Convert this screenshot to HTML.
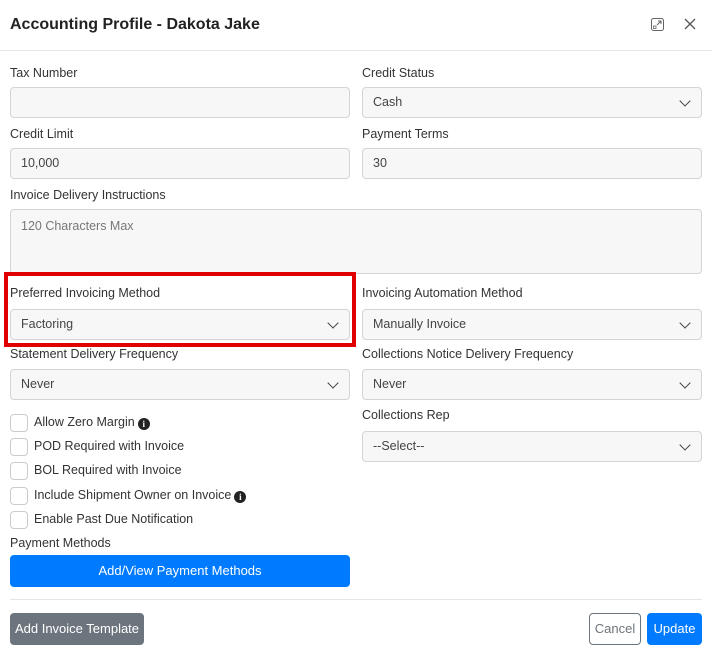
<!DOCTYPE html>
<html><head><meta charset="utf-8"><style>
*{box-sizing:border-box;margin:0;padding:0}
body{width:712px;height:661px;background:#fff;font-family:"Liberation Sans",sans-serif;font-size:12.5px;color:#333;position:relative;overflow:hidden}
.a{position:absolute}
.lbl{position:absolute;font-size:12.5px;color:#333;line-height:16px}
.in{position:absolute;height:31px;background:#f7f7f7;border:1px solid #d4d4d4;border-radius:4px;padding-left:10px;line-height:29px;color:#444;font-size:12.5px}
.in.sel::after{content:"";position:absolute;right:12px;top:9px;width:7px;height:7px;border-right:1.4px solid #444;border-bottom:1.4px solid #444;transform:rotate(45deg)}
.cb{position:absolute;left:10px;width:18px;height:18px;border:1px solid #ccc;border-radius:4px;background:#fff}
.ct{position:absolute;left:34px;font-size:12.5px;line-height:16px;color:#333}
.info{display:inline-block;width:12px;height:12px;border-radius:50%;background:#222;color:#fff;font-size:9px;font-weight:bold;text-align:center;line-height:12px;vertical-align:-1px;margin-left:3px;font-family:"Liberation Serif",serif}
</style></head><body>
<div class="a" style="left:10px;top:15px;font-size:16px;font-weight:bold;color:#222;line-height:20px">Accounting Profile - Dakota Jake</div>
<svg class="a" style="left:651px;top:18px" width="13" height="13" viewBox="0 0 13 13"><rect x="0.5" y="0.5" width="12" height="12" rx="2" fill="none" stroke="#666"/><path d="M6 7 L10 3 M7 3 H10 V6" stroke="#666" fill="none"/><rect x="2.5" y="8" width="2.5" height="2.5" fill="none" stroke="#666" stroke-width=".8"/></svg>
<svg class="a" style="left:684px;top:18px" width="12" height="12" viewBox="0 0 12 12"><path d="M1 1 L11 11 M11 1 L1 11" stroke="#555" stroke-width="1.3"/></svg>
<div class="a" style="left:0;top:50px;width:712px;height:1px;background:#e5e5e5"></div>

<div class="lbl" style="left:10px;top:65px">Tax Number</div>
<div class="in" style="left:10px;top:87px;width:340px"></div>
<div class="lbl" style="left:362px;top:65px">Credit Status</div>
<div class="in sel" style="left:362px;top:87px;width:340px">Cash</div>

<div class="lbl" style="left:10px;top:126px">Credit Limit</div>
<div class="in" style="left:10px;top:148px;width:340px">10,000</div>
<div class="lbl" style="left:362px;top:126px">Payment Terms</div>
<div class="in" style="left:362px;top:148px;width:340px">30</div>

<div class="lbl" style="left:10px;top:187px">Invoice Delivery Instructions</div>
<div class="in" style="left:10px;top:209px;width:692px;height:65px;line-height:16px;padding-top:8px;color:#777">120 Characters Max</div>

<div class="lbl" style="left:10px;top:285px">Preferred Invoicing Method</div>
<div class="in sel" style="left:10px;top:309px;width:340px">Factoring</div>
<div class="a" style="left:4px;top:272px;width:352px;height:75px;border:4px solid #e00000"></div>
<div class="lbl" style="left:362px;top:285px">Invoicing Automation Method</div>
<div class="in sel" style="left:362px;top:309px;width:340px">Manually Invoice</div>

<div class="lbl" style="left:10px;top:346px">Statement Delivery Frequency</div>
<div class="in sel" style="left:10px;top:369px;width:340px">Never</div>
<div class="lbl" style="left:362px;top:346px">Collections Notice Delivery Frequency</div>
<div class="in sel" style="left:362px;top:369px;width:340px">Never</div>

<div class="lbl" style="left:362px;top:407px">Collections Rep</div>
<div class="in sel" style="left:362px;top:431px;width:340px">--Select--</div>

<div class="cb" style="top:414px"></div><div class="ct" style="top:414px">Allow Zero Margin<span class="info">i</span></div>
<div class="cb" style="top:438px"></div><div class="ct" style="top:438px">POD Required with Invoice</div>
<div class="cb" style="top:462px"></div><div class="ct" style="top:462px">BOL Required with Invoice</div>
<div class="cb" style="top:487px"></div><div class="ct" style="top:487px">Include Shipment Owner on Invoice<span class="info">i</span></div>
<div class="cb" style="top:511px"></div><div class="ct" style="top:511px">Enable Past Due Notification</div>

<div class="lbl" style="left:10px;top:535px">Payment Methods</div>
<div class="a" style="left:10px;top:555px;width:340px;height:32px;background:#007bff;border-radius:4px;color:#fff;text-align:center;line-height:32px;font-size:13px">Add/View Payment Methods</div>

<div class="a" style="left:10px;top:599px;width:692px;height:1px;background:#e5e5e5"></div>
<div class="a" style="left:10px;top:613px;width:134px;height:32px;background:#6c757d;border-radius:4px;color:#fff;text-align:center;line-height:32px;font-size:13px">Add Invoice Template</div>
<div class="a" style="left:589px;top:613px;width:52px;height:32px;border:1px solid #6c757d;border-radius:4px;color:#6c757d;text-align:center;line-height:30px;font-size:13px">Cancel</div>
<div class="a" style="left:647px;top:613px;width:55px;height:32px;background:#007bff;border-radius:4px;color:#fff;text-align:center;line-height:32px;font-size:13px">Update</div>
</body></html>
